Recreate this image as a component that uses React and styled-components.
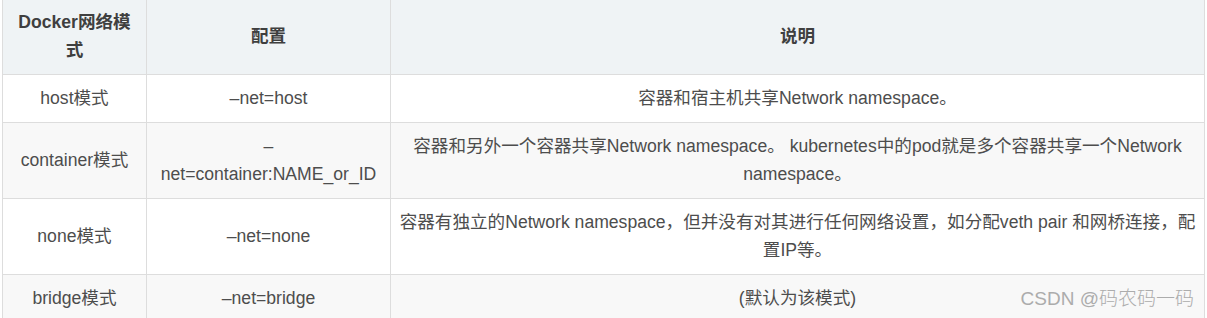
import styled, { createGlobalStyle } from 'styled-components';

const GlobalStyle = createGlobalStyle`
  html, body {
    margin: 0;
    padding: 0;
    background: #ffffff;
  }
`;

// 페이지 전체 (워터마크 기준)
const Page = styled.div`
  position: relative;
  width: 1207px;
  height: 318px;
  overflow: hidden;
  font-family: "Liberation Sans", "Noto Sans CJK SC", sans-serif;
  color: #4d4d4d;
`;

const Table = styled.table`
  margin: -1px 0 0 2px;
  width: 1203px;
  table-layout: fixed;
  border-collapse: collapse;
  font-size: 17.6px;
  line-height: 28px;
`;

const Col = styled.col`
  width: ${props => props.w};
`;

const Th = styled.th`
  padding: 8px 12px 10px;
  background: #eff3f5;
  border: 1px solid #dddddd;
  color: #3f3f3f;
  font-weight: bold;
  text-align: center;
  vertical-align: middle;
`;

const Tr = styled.tr`
  background: ${props => props.striped ? '#f8f8f8' : '#ffffff'};
`;

const Td = styled.td`
  padding: 9px ${props => props.wide ? '4px' : '12px'} 10px;
  border: 1px solid #dddddd;
  text-align: center;
  vertical-align: middle;
`;

// CSDN 워터마크
const Watermark = styled.div`
  position: absolute;
  right: 13px;
  top: 289px;
  font-size: 19px;
  line-height: 20px;
  font-weight: 300;
  color: #acacac;
  white-space: nowrap;
`;

const rows = [
  ['host模式', '–net=host', '容器和宿主机共享Network namespace。'],
  ['container模式', '–net=container:NAME_or_ID', '容器和另外一个容器共享Network namespace。 kubernetes中的pod就是多个容器共享一个Network namespace。'],
  ['none模式', '–net=none', '容器有独立的Network namespace，但并没有对其进行任何网络设置，如分配veth pair 和网桥连接，配置IP等。'],
  ['bridge模式', '–net=bridge', '(默认为该模式)'],
];

export default function App() {
  return (
    <Page>
      <GlobalStyle />
      <Table>
        <colgroup>
          <Col w="144px" />
          <Col w="244px" />
          <Col w="auto" />
        </colgroup>
        <thead>
          <tr>
            <Th>Docker网络模式</Th>
            <Th>配置</Th>
            <Th>说明</Th>
          </tr>
        </thead>
        <tbody>
          {rows.map((r, i) => (
            <Tr key={r[0]} striped={i % 2 === 1}>
              <Td>{r[0]}</Td>
              <Td>{r[1]}</Td>
              <Td wide>{r[2]}</Td>
            </Tr>
          ))}
        </tbody>
      </Table>
      <Watermark>CSDN @码农码一码</Watermark>
    </Page>
  );
}
